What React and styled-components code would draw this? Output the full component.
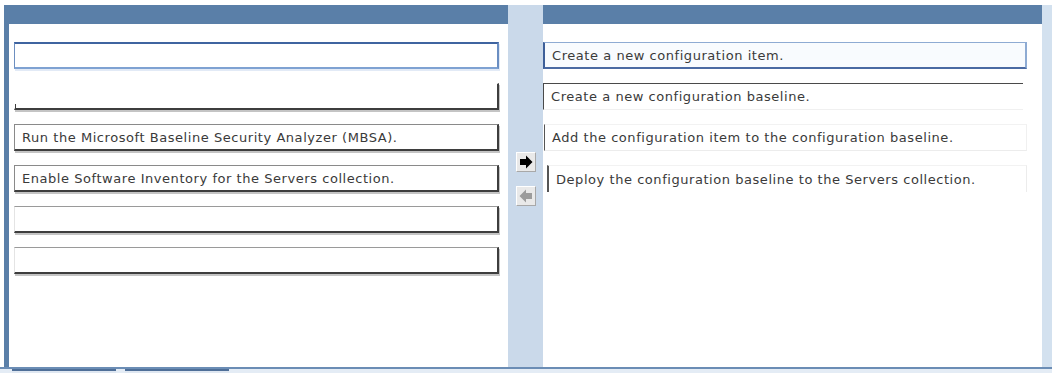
import React from "react";
import styled, { createGlobalStyle, css } from "styled-components";

const GlobalStyle = createGlobalStyle`
  html, body {
    margin: 0;
    padding: 0;
    background: #ffffff;
  }
  body {
    font-family: "DejaVu Sans", Verdana, sans-serif;
  }
`;

const blue = "#5a7fa8";
const paleBlue = "#cad9ea";

const leftItems = [
  { text: "", variant: "selected" },
  { text: "", variant: "open" },
  { text: "Run the Microsoft Baseline Security Analyzer (MBSA).", variant: "solid" },
  { text: "Enable Software Inventory for the Servers collection.", variant: "solid" },
  { text: "", variant: "faint" },
  { text: "", variant: "faint" },
];

const rightItems = [
  { text: "Create a new configuration item.", variant: "selected" },
  { text: "Create a new configuration baseline.", variant: "topline" },
  { text: "Add the configuration item to the configuration baseline.", variant: "edge" },
  { text: "Deploy the configuration baseline to the Servers collection.", variant: "edgeIndent" },
];

export default function App() {
  return (
    <Page>
      <GlobalStyle />
      <Frame>
        <Panel>
          <Header />
          <LeftBody>
            {leftItems.map((item, i) => (
              <AnswerBox key={i} $variant={item.variant}>
                {item.text}
              </AnswerBox>
            ))}
          </LeftBody>
        </Panel>
        <Middle>
          <ArrowButton title="Move right">
            <svg width="14" height="14" viewBox="0 0 14 14">
              <path d="M1 4h6V0.5L13.5 7 7 13.5V10H1z" fill="#000" />
            </svg>
          </ArrowButton>
          <ArrowButton title="Move left">
            <svg width="14" height="14" viewBox="0 0 14 14">
              <path d="M13 4H7V0.5L0.5 7 7 13.5V10H13z" fill="#9c9c9c" />
            </svg>
          </ArrowButton>
        </Middle>
        <Panel $right>
          <Header />
          <RightBody>
            {rightItems.map((item, i) => (
              <OrderItem key={i} $variant={item.variant}>
                {item.text}
              </OrderItem>
            ))}
          </RightBody>
        </Panel>
        <SideStrip />
      </Frame>
      <BottomLine />
      <TabRow>
        <Tab />
        <Tab />
      </TabRow>
    </Page>
  );
}

const Page = styled.div`
  width: 1052px;
  height: 373px;
  padding-top: 5px;
  box-sizing: border-box;
  overflow: hidden;
  background: #ffffff;
`;

const Frame = styled.div`
  display: flex;
  height: 362px;
  margin-left: 4px;
`;

const Panel = styled.div`
  display: flex;
  flex-direction: column;
  width: ${(p) => (p.$right ? "499px" : "504px")};
`;

const Header = styled.div`
  height: 19px;
  background: ${blue};
  flex-shrink: 0;
`;

const LeftBody = styled.div`
  flex: 1;
  background: #ffffff;
  border-left: 5px solid ${blue};
  padding: 18px 0 0 5px;
  display: flex;
  flex-direction: column;
  gap: 14px;
`;

const RightBody = styled.div`
  flex: 1;
  background: #ffffff;
  padding-top: 18px;
  display: flex;
  flex-direction: column;
  gap: 14px;
`;

const textStyle = css`
  font-size: 13px;
  letter-spacing: 0.55px;
  color: #3a3a3a;
  white-space: nowrap;
`;

const boxVariants = {
  selected: css`
    border-top: 2px solid #3f64a0;
    border-left: 1px solid #6d8fc0;
    border-bottom: 2px solid #7fa2d2;
    border-right: 2px solid #6a8ec2;
    box-shadow: 1px 2px 0 #e2eaf6;
  `,
  open: css`
    border-top: 1px solid transparent;
    border-left: 1px solid transparent;
    border-bottom: 2px solid #3e3e3e;
    border-right: 2px solid #3e3e3e;
    box-shadow: 1px 2px 0 #c4c4c4;
    background-image: linear-gradient(#3e3e3e, #3e3e3e);
    background-size: 1px 4px;
    background-position: left bottom;
    background-repeat: no-repeat;
  `,
  solid: css`
    border-top: 1px solid #8a8a8a;
    border-left: 1px solid #8a8a8a;
    border-bottom: 2px solid #3e3e3e;
    border-right: 2px solid #3e3e3e;
    box-shadow: 1px 2px 0 #c4c4c4;
  `,
  faint: css`
    border-top: 1px solid #9a9a9a;
    border-left: 1px solid #e4e4e4;
    border-bottom: 2px solid #3e3e3e;
    border-right: 2px solid #3e3e3e;
    box-shadow: 1px 2px 0 #c4c4c4;
  `,
};

const AnswerBox = styled.div`
  width: 485px;
  height: 27px;
  box-sizing: border-box;
  display: flex;
  align-items: center;
  padding-left: 7px;
  background-color: #ffffff;
  ${textStyle}
  ${(p) => boxVariants[p.$variant]}
`;

const itemVariants = {
  selected: css`
    background: #f8fbfe;
    border-top: 1px solid #8eabd3;
    border-left: 2px solid #3d5f99;
    border-bottom: 2px solid #4a6aa3;
    border-right: 2px solid #8eabd3;
  `,
  topline: css`
    border-top: 1px solid #4a4a4a;
    border-left: 1px solid #4a4a4a;
    border-bottom: 1px solid #f0f0f0;
    width: 480px;
  `,
  edge: css`
    margin-left: 1px;
    border-top: 1px solid #f2f2f2;
    border-left: 1px solid #555;
    border-bottom: 1px solid #ececec;
    border-right: 1px solid #f0f0f0;
    width: 483px;
  `,
  edgeIndent: css`
    margin-left: 4px;
    border-top: 1px solid #f2f2f2;
    border-left: 2px solid #555;
    border-right: 1px solid #ececec;
    width: 480px;
  `,
};

const OrderItem = styled.div`
  width: 484px;
  height: 27px;
  box-sizing: border-box;
  display: flex;
  align-items: center;
  padding-left: 7px;
  ${textStyle}
  ${(p) => itemVariants[p.$variant]}
`;

const Middle = styled.div`
  width: 35px;
  background: ${paleBlue};
  display: flex;
  flex-direction: column;
  align-items: center;
  padding-top: 147px;
  gap: 14px;
  box-sizing: border-box;
`;

const ArrowButton = styled.div`
  width: 20px;
  height: 20px;
  box-sizing: border-box;
  display: flex;
  align-items: center;
  justify-content: center;
  background: #e9e9e9;
  border-top: 1px solid #ffffff;
  border-left: 1px solid #ffffff;
  border-bottom: 1px solid #a8a8a8;
  border-right: 1px solid #a8a8a8;
`;

const SideStrip = styled.div`
  flex: 1;
  background: #d3e1ef;
`;

const BottomLine = styled.div`
  height: 2px;
  background: #6b8db5;
`;

const TabRow = styled.div`
  display: flex;
  gap: 9px;
  padding-left: 12px;
  background: #e4ecf5;
  height: 4px;
`;

const Tab = styled.div`
  width: 104px;
  border-top: 2px solid #4f6f98;
  background: #dfe7f1;
`;
